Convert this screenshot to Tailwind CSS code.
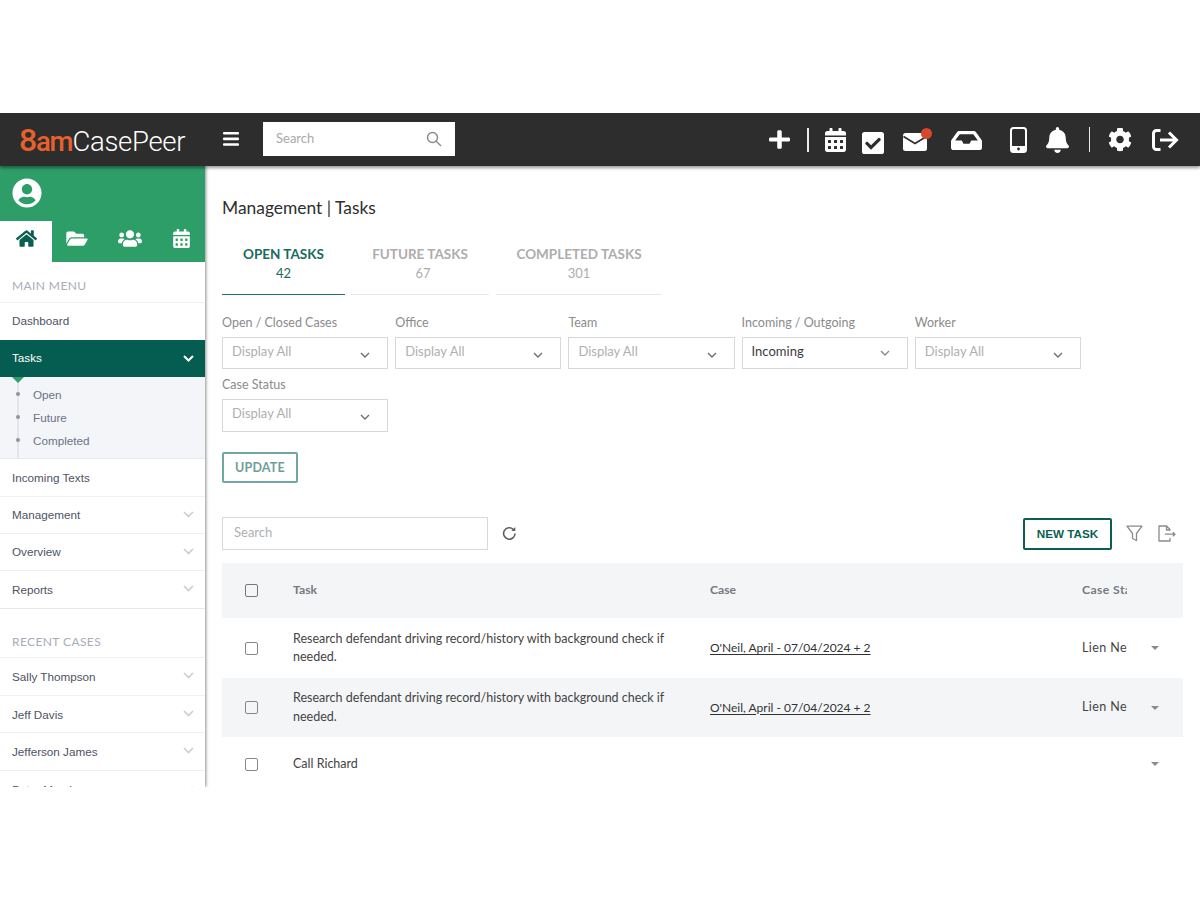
<!DOCTYPE html>
<html lang="en">
<head>
  <meta charset="UTF-8" />
  <title>Management | Tasks</title>
  <script src="https://cdn.jsdelivr.net/npm/@tailwindcss/browser@4"></script>
</head>
<body class="bg-white h-[900px] overflow-hidden font-['Lato',sans-serif]">
  <div class="pt-[113px]">
    <div class="h-[674px] flex flex-col overflow-hidden">

      <!-- top bar -->
      <header class="relative z-20 h-[53px] shrink-0 bg-[#2d2d2d] shadow-[0_2px_3px_rgba(0,0,0,0.4)] flex items-center text-white">
        <div class="ml-[19px] w-[204px] shrink-0 text-[27.5px] leading-none font-['Roboto',sans-serif] font-light tracking-[-0.3px] whitespace-nowrap"><span class="text-[#e8602c] font-medium tracking-[-1.2px]"><span class="text-[32px]">8</span>am</span>CasePeer</div>
        <svg class="w-[16px] h-[14px] shrink-0 -mt-[2px]" viewBox="0 0 16 14" fill="white"><rect width="16" height="2.6" rx="1"/><rect y="5.6" width="16" height="2.6" rx="1"/><rect y="11.2" width="16" height="2.6" rx="1"/></svg>
        <div class="ml-[24px] -mt-[1px] w-[192px] h-[34px] bg-white flex items-center justify-between pl-[13px] pr-[13px] shrink-0">
          <span class="text-[13px] text-[#a9a9a9]">Search</span>
          <svg class="w-[16px] h-[16px]" viewBox="0 0 16 16" fill="none" stroke="#8a8a8a" stroke-width="1.4"><circle cx="6.5" cy="6.5" r="5"/><path d="M10.2 10.2L15 15"/></svg>
        </div>
        <div class="ml-auto mr-[21px] flex items-center">
          <svg class="w-[21px] h-[21px]" viewBox="0 0 448 512" preserveAspectRatio="none" fill="white"><path d="M416 208H272V64c0-17.67-14.33-32-32-32h-32c-17.67 0-32 14.33-32 32v144H32c-17.67 0-32 14.33-32 32v32c0 17.67 14.33 32 32 32h144v144c0 17.67 14.33 32 32 32h32c17.67 0 32-14.33 32-32V304h144c17.67 0 32-14.33 32-32v-32c0-17.67-14.33-32-32-32z"/></svg>
          <div class="ml-[17px] w-[1.5px] h-[24px] bg-white/90"></div>
          <svg class="ml-[16px] w-[21px] h-[24px]" viewBox="0 0 448 512" fill="white"><path d="M0 464c0 26.5 21.5 48 48 48h352c26.5 0 48-21.5 48-48V192H0v272zm320-196c0-6.6 5.4-12 12-12h40c6.6 0 12 5.4 12 12v40c0 6.6-5.4 12-12 12h-40c-6.6 0-12-5.4-12-12v-40zm0 128c0-6.6 5.4-12 12-12h40c6.6 0 12 5.4 12 12v40c0 6.6-5.4 12-12 12h-40c-6.6 0-12-5.4-12-12v-40zM192 268c0-6.6 5.4-12 12-12h40c6.6 0 12 5.4 12 12v40c0 6.6-5.4 12-12 12h-40c-6.6 0-12-5.4-12-12v-40zm0 128c0-6.6 5.4-12 12-12h40c6.6 0 12 5.4 12 12v40c0 6.6-5.4 12-12 12h-40c-6.6 0-12-5.4-12-12v-40zM64 268c0-6.6 5.4-12 12-12h40c6.6 0 12 5.4 12 12v40c0 6.6-5.4 12-12 12H76c-6.6 0-12-5.4-12-12v-40zm0 128c0-6.6 5.4-12 12-12h40c6.6 0 12 5.4 12 12v40c0 6.6-5.4 12-12 12H76c-6.6 0-12-5.4-12-12v-40zM400 64h-48V16c0-8.8-7.2-16-16-16h-32c-8.8 0-16 7.2-16 16v48H160V16c0-8.8-7.2-16-16-16h-32c-8.8 0-16 7.2-16 16v48H48C21.5 64 0 85.5 0 112v48h448v-48c0-26.5-21.5-48-48-48z"/></svg>
          <svg class="ml-[16px] mt-[6px] w-[22px] h-[22px]" viewBox="0 32 448 448" preserveAspectRatio="none" fill="white"><path d="M400 480H48c-26.51 0-48-21.49-48-48V80c0-26.51 21.49-48 48-48h352c26.51 0 48 21.49 48 48v352c0 26.51-21.49 48-48 48zm-204.686-98.059l184-184c6.248-6.248 6.248-16.379 0-22.627l-22.627-22.627c-6.248-6.248-16.379-6.249-22.628 0L184 302.745l-70.059-70.059c-6.248-6.248-16.379-6.248-22.628 0l-22.627 22.627c-6.248 6.248-6.248 16.379 0 22.627l104 104c6.249 6.25 16.379 6.25 22.628.001z"/></svg>
          <div class="relative ml-[19px] mt-[4px] w-[24px] h-[18px]">
            <svg class="w-[24px] h-[18px]" viewBox="0 0 24 18"><rect width="24" height="18" rx="2.5" fill="white"/><path d="M0.5 3.5L12 10.5L23.5 3.5" fill="none" stroke="#2d2d2d" stroke-width="1.6"/></svg>
            <span class="absolute -right-[5px] -top-[5px] w-[11px] h-[11px] rounded-full bg-[#d9472b]"></span>
          </div>
          <svg class="ml-[24px] mt-[1px] w-[31px] h-[19px]" viewBox="0 64 576 384" preserveAspectRatio="none" fill="white"><path d="M567.938 243.908L462.25 85.374A48.003 48.003 0 0 0 422.311 64H153.689a48 48 0 0 0-39.938 21.374L8.062 243.908A47.994 47.994 0 0 0 0 270.533V400c0 26.51 21.49 48 48 48h480c26.51 0 48-21.49 48-48V270.533a47.994 47.994 0 0 0-8.062-26.625zM162.252 128h251.497l85.333 128H376l-32 64H232l-32-64H76.918l85.334-128z"/></svg>
          <svg class="ml-[28px] w-[17px] h-[26px]" viewBox="0 0 17 26"><rect x="1" y="1" width="15" height="24" rx="2.5" fill="none" stroke="white" stroke-width="2"/><rect x="1" y="19" width="15" height="6" fill="white"/><circle cx="8.5" cy="22" r="1.4" fill="#2d2d2d"/></svg>
          <svg class="ml-[19px] w-[23px] h-[26px]" viewBox="0 0 448 512" preserveAspectRatio="none" fill="white"><path d="M224 512c35.32 0 63.97-28.65 63.97-64H160.03c0 35.35 28.65 64 63.97 64zm215.39-149.71c-19.32-20.76-55.47-51.99-55.47-154.29 0-77.7-54.48-139.9-127.94-155.16V32c0-17.67-14.32-32-31.98-32s-31.98 14.33-31.98 32v20.84C118.56 68.1 64.08 130.3 64.08 208c0 102.3-36.15 133.53-55.47 154.29-6 6.45-8.66 14.16-8.61 21.71.11 16.4 12.98 32 32.1 32h383.8c19.12 0 32-15.6 32.1-32 .05-7.55-2.61-15.27-8.61-21.71z"/></svg>
          <div class="ml-[20px] w-[1.5px] h-[25px] bg-white/90"></div>
          <svg class="ml-[18px] w-[24px] h-[25px]" viewBox="0 0 512 512" fill="white"><path d="M487.4 315.7l-42.6-24.6c4.3-23.2 4.3-47 0-70.2l42.6-24.6c4.9-2.8 7.1-8.6 5.5-14-11.1-35.6-30-67.8-54.7-94.6-3.8-4.1-10-5.1-14.8-2.3L380.8 110c-17.9-15.4-38.5-27.3-60.8-35.1V25.8c0-5.6-3.9-10.5-9.4-11.7-36.7-8.2-74.3-7.8-109.2 0-5.5 1.2-9.4 6.1-9.4 11.7V75c-22.2 7.9-42.8 19.8-60.8 35.1L88.7 85.5c-4.9-2.8-11-1.9-14.8 2.3-24.7 26.7-43.6 58.9-54.7 94.6-1.7 5.4.6 11.2 5.5 14L67.3 221c-4.3 23.2-4.3 47 0 70.2l-42.6 24.6c-4.9 2.8-7.1 8.6-5.5 14 11.1 35.6 30 67.8 54.7 94.6 3.8 4.1 10 5.1 14.8 2.3l42.6-24.6c17.9 15.4 38.5 27.3 60.8 35.1v49.2c0 5.6 3.9 10.5 9.4 11.7 36.7 8.2 74.3 7.8 109.2 0 5.5-1.2 9.4-6.1 9.4-11.7v-49.2c22.2-7.9 42.8-19.8 60.8-35.1l42.6 24.6c4.9 2.8 11 1.9 14.8-2.3 24.7-26.7 43.6-58.9 54.7-94.6 1.5-5.5-.7-11.3-5.6-14.1zM256 336c-44.1 0-80-35.9-80-80s35.9-80 80-80 80 35.9 80 80-35.9 80-80 80z"/></svg>
          <svg class="ml-[20px] w-[27px] h-[22px]" viewBox="0 0 27 22" fill="none" stroke="white" stroke-width="3"><path d="M8.5 1.5H4.5a3 3 0 0 0-3 3v13a3 3 0 0 0 3 3h4"/><path d="M8 11h16M17 3.5l7.5 7.5L17 18.5"/></svg>
        </div>
      </header>

      <div class="flex flex-1 min-h-0">
        <!-- sidebar -->
        <aside class="relative z-10 w-[205px] shrink-0 bg-white shadow-[1px_0_3px_rgba(0,0,0,0.45)] overflow-hidden font-['Liberation_Sans',sans-serif] text-[11.7px] text-[#4d5364]">
          <div class="bg-[#2e9e68]">
            <div class="h-[55px] pl-[12px] pt-[12px]">
              <svg class="w-[30px] h-[30px]" viewBox="0 0 496 512" fill="white"><path d="M248 8C111 8 0 119 0 256s111 248 248 248 248-111 248-248S385 8 248 8zm0 96c48.6 0 88 39.4 88 88s-39.4 88-88 88-88-39.4-88-88 39.4-88 88-88zm0 344c-58.7 0-111.3-26.6-146.5-68.2 18.8-35.4 55.6-59.8 98.5-59.8 2.4 0 4.8.4 7.1 1.1 13 4.2 26.6 6.9 40.9 6.9 14.3 0 28-2.7 40.9-6.9 2.3-.7 4.7-1.1 7.1-1.1 42.9 0 79.7 24.4 98.5 59.8C359.3 421.4 306.7 448 248 448z"/></svg>
            </div>
            <div class="h-[41px] grid grid-cols-[52px_50px_55px_48px]">
              <div class="bg-white flex items-center justify-center">
                <svg class="w-[21px] h-[19px] -mt-[6px]" viewBox="0 0 576 512" fill="#0b5f52"><path d="M280.37 148.26L96 300.11V464a16 16 0 0 0 16 16l112.06-.29a16 16 0 0 0 15.92-16V368a16 16 0 0 1 16-16h64a16 16 0 0 1 16 16v95.64a16 16 0 0 0 16 16.05L464 480a16 16 0 0 0 16-16V300L295.67 148.26a12.19 12.19 0 0 0-15.3 0zM571.6 251.47L488 182.56V44.05a12 12 0 0 0-12-12h-56a12 12 0 0 0-12 12v72.61L318.47 43a48 48 0 0 0-61 0L4.34 251.47a12 12 0 0 0-1.6 16.9l25.5 31A12 12 0 0 0 45.15 301l235.22-193.74a12.19 12.19 0 0 1 15.3 0L530.9 301a12 12 0 0 0 16.9-1.6l25.5-31a12 12 0 0 0-1.7-16.93z"/></svg>
              </div>
              <div class="flex items-center justify-center">
                <svg class="w-[22px] h-[19px] -mt-[6px]" viewBox="0 0 576 512" fill="white"><path d="M572.694 292.093L500.27 416.248A63.997 63.997 0 0 1 444.989 448H45.025c-18.523 0-30.064-20.093-20.731-36.093l72.424-124.155A64 64 0 0 1 152 256h399.964c18.523 0 30.064 20.093 20.73 36.093zM152 224h328v-48c0-26.51-21.49-48-48-48H272l-64-64H48C21.49 64 0 85.49 0 112v278.046l69.077-118.418C86.214 242.25 117.989 224 152 224z"/></svg>
              </div>
              <div class="flex items-center justify-center">
                <svg class="w-[24px] h-[19px] -mt-[6px]" viewBox="0 0 640 512" fill="white"><path d="M96 224c35.3 0 64-28.7 64-64s-28.7-64-64-64-64 28.7-64 64 28.7 64 64 64zm448 0c35.3 0 64-28.7 64-64s-28.7-64-64-64-64 28.7-64 64 28.7 64 64 64zm32 32h-64c-17.6 0-33.5 7.1-45.1 18.6 40.3 22.1 68.9 62 75.1 109.4h66c17.7 0 32-14.3 32-32v-32c0-35.3-28.7-64-64-64zm-256 0c61.9 0 112-50.1 112-112S381.9 32 320 32 208 82.1 208 144s50.1 112 112 112zm76.8 32h-8.3c-20.8 10-43.9 16-68.5 16s-47.6-6-68.5-16h-8.3C179.6 288 128 339.6 128 403.2V432c0 26.5 21.5 48 48 48h288c26.5 0 48-21.5 48-48v-28.8c0-63.6-51.6-115.2-115.2-115.2zm-223.7-13.4C161.5 263.1 145.6 256 128 256H64c-35.3 0-64 28.7-64 64v32c0 17.7 14.3 32 32 32h65.9c6.3-47.4 34.9-87.3 75.2-109.4z"/></svg>
              </div>
              <div class="flex items-center justify-center">
                <svg class="w-[17px] h-[19px] -mt-[6px]" viewBox="0 0 448 512" fill="white"><path d="M0 464c0 26.5 21.5 48 48 48h352c26.5 0 48-21.5 48-48V192H0v272zm320-196c0-6.6 5.4-12 12-12h40c6.6 0 12 5.4 12 12v40c0 6.6-5.4 12-12 12h-40c-6.6 0-12-5.4-12-12v-40zm0 128c0-6.6 5.4-12 12-12h40c6.6 0 12 5.4 12 12v40c0 6.6-5.4 12-12 12h-40c-6.6 0-12-5.4-12-12v-40zM192 268c0-6.6 5.4-12 12-12h40c6.6 0 12 5.4 12 12v40c0 6.6-5.4 12-12 12h-40c-6.6 0-12-5.4-12-12v-40zm0 128c0-6.6 5.4-12 12-12h40c6.6 0 12 5.4 12 12v40c0 6.6-5.4 12-12 12h-40c-6.6 0-12-5.4-12-12v-40zM64 268c0-6.6 5.4-12 12-12h40c6.6 0 12 5.4 12 12v40c0 6.6-5.4 12-12 12H76c-6.6 0-12-5.4-12-12v-40zm0 128c0-6.6 5.4-12 12-12h40c6.6 0 12 5.4 12 12v40c0 6.6-5.4 12-12 12H76c-6.6 0-12-5.4-12-12v-40zM400 64h-48V16c0-8.8-7.2-16-16-16h-32c-8.8 0-16 7.2-16 16v48H160V16c0-8.8-7.2-16-16-16h-32c-8.8 0-16 7.2-16 16v48H48C21.5 64 0 85.5 0 112v48h448v-48c0-26.5-21.5-48-48-48z"/></svg>
              </div>
            </div>
          </div>

          <div class="h-[41px] pl-[12px] flex items-end pb-[7px] font-['Lato',sans-serif] text-[12px] tracking-[0.4px] text-[#a7adba] border-b border-[#edeff2]">MAIN MENU</div>
          <div class="h-[37px] pl-[12px] pb-[1px] flex items-center">Dashboard</div>
          <div class="h-[37px] pl-[12px] pr-[11px] pb-[1px] flex items-center justify-between bg-[#055c50] text-white">
            Tasks
            <svg class="w-[11px] h-[7px]" viewBox="0 0 11 7" fill="none" stroke="white" stroke-width="2"><path d="M1 1l4.5 4.5L10 1"/></svg>
          </div>
          <div class="relative h-[82px] bg-[#f3f5f8] text-[#6b7389] border-b border-[#e8eaee]">
            <span class="absolute left-[17px] top-0 bottom-0 w-[2px] bg-[#e2e5ea]"></span>
            <span class="absolute left-[12px] top-0 w-0 h-0 border-x-[6px] border-x-transparent border-t-[6px] border-t-[#2e9e68]"></span>
            <div class="relative flex flex-col pl-[33px] pt-[6px]">
              <div class="h-[23px] flex items-center"><span class="absolute left-[16px] w-[4px] h-[4px] rounded-full bg-[#8e939c] -mt-[2px]"></span>Open</div>
              <div class="h-[23px] flex items-center"><span class="absolute left-[16px] w-[4px] h-[4px] rounded-full bg-[#8e939c] -mt-[2px]"></span>Future</div>
              <div class="h-[23px] flex items-center"><span class="absolute left-[16px] w-[4px] h-[4px] rounded-full bg-[#8e939c] -mt-[2px]"></span>Completed</div>
            </div>
          </div>
          <div class="h-[38px] pl-[12px] flex items-center border-b border-[#edeff2]">Incoming Texts</div>
          <div class="h-[37px] pl-[12px] pr-[11px] flex items-center justify-between border-b border-[#edeff2]">Management<svg class="w-[11px] h-[7px] -mt-[2px]" viewBox="0 0 11 7" fill="none" stroke="#c9cdd4" stroke-width="1.6"><path d="M1 1l4.5 4.5L10 1"/></svg></div>
          <div class="h-[37px] pl-[12px] pr-[11px] flex items-center justify-between border-b border-[#edeff2]">Overview<svg class="w-[11px] h-[7px] -mt-[2px]" viewBox="0 0 11 7" fill="none" stroke="#c9cdd4" stroke-width="1.6"><path d="M1 1l4.5 4.5L10 1"/></svg></div>
          <div class="h-[38px] pl-[12px] pr-[11px] flex items-center justify-between border-b border-[#e6e8ec]">Reports<svg class="w-[11px] h-[7px] -mt-[2px]" viewBox="0 0 11 7" fill="none" stroke="#c9cdd4" stroke-width="1.6"><path d="M1 1l4.5 4.5L10 1"/></svg></div>

          <div class="h-[49px] pl-[12px] flex items-end pb-[6px] font-['Lato',sans-serif] text-[12px] tracking-[0.4px] text-[#a7adba] border-b border-[#edeff2]">RECENT CASES</div>
          <div class="h-[38px] pl-[12px] pr-[11px] flex items-center justify-between border-b border-[#edeff2]">Sally Thompson<svg class="w-[11px] h-[7px] -mt-[2px]" viewBox="0 0 11 7" fill="none" stroke="#c9cdd4" stroke-width="1.6"><path d="M1 1l4.5 4.5L10 1"/></svg></div>
          <div class="h-[37px] pl-[12px] pr-[11px] pt-[1px] flex items-center justify-between border-b border-[#edeff2]">Jeff Davis<svg class="w-[11px] h-[7px] -mt-[2px]" viewBox="0 0 11 7" fill="none" stroke="#c9cdd4" stroke-width="1.6"><path d="M1 1l4.5 4.5L10 1"/></svg></div>
          <div class="h-[38px] pl-[12px] pr-[11px] flex items-center justify-between border-b border-[#edeff2]">Jefferson James<svg class="w-[11px] h-[7px] -mt-[2px]" viewBox="0 0 11 7" fill="none" stroke="#c9cdd4" stroke-width="1.6"><path d="M1 1l4.5 4.5L10 1"/></svg></div>
          <div class="h-[38px] pl-[12px] pr-[11px] flex items-center justify-between">Peter Marsh<svg class="w-[11px] h-[7px] -mt-[2px]" viewBox="0 0 11 7" fill="none" stroke="#c9cdd4" stroke-width="1.6"><path d="M1 1l4.5 4.5L10 1"/></svg></div>
        </aside>

        <!-- main -->
        <main class="flex-1 min-w-0 pl-[17px] pr-[17px] overflow-hidden">
          <h1 class="mt-[31px] text-[17.4px] leading-[22px] text-[#2e2e2e]">Management | Tasks</h1>

          <div class="mt-[15px] flex text-[13.5px] leading-[19px] font-bold text-center">
            <div class="w-[123px] h-[61px] pt-[11px] border-b border-[#1d7367] text-[#1a6a5e]">OPEN TASKS<div class="font-normal text-[13px]">42</div></div>
            <div class="ml-[6px] w-[138px] h-[61px] pt-[11px] border-b border-[#eaeaea] text-[#adadad]">FUTURE TASKS<div class="font-normal text-[13px] pl-[6px]">67</div></div>
            <div class="ml-[7px] w-[166px] h-[61px] pt-[11px] border-b border-[#eaeaea] text-[#adadad]">COMPLETED TASKS<div class="font-normal text-[13px]">301</div></div>
          </div>

          <div class="mt-[20px] w-[870px] flex flex-wrap gap-x-[7px] text-[12.5px] text-[#8b8b8b]">
            <div class="w-[166.2px]">
              <div class="h-[15px] leading-[15px]">Open / Closed Cases</div>
              <div class="mt-[7px] h-[32px] border border-[#d8d8d8] pl-[9px] pr-[17px] pb-[3px] flex items-center justify-between text-[13px] text-[#b0b0b0]">Display All<svg class="w-[10px] h-[6px] mt-[6px]" viewBox="0 0 10 6" fill="none" stroke="#6f6f6f" stroke-width="1.4"><path d="M1 1l4 4 4-4"/></svg></div>
            </div>
            <div class="w-[166.2px]">
              <div class="h-[15px] leading-[15px]">Office</div>
              <div class="mt-[7px] h-[32px] border border-[#d8d8d8] pl-[9px] pr-[17px] pb-[3px] flex items-center justify-between text-[13px] text-[#b0b0b0]">Display All<svg class="w-[10px] h-[6px] mt-[6px]" viewBox="0 0 10 6" fill="none" stroke="#6f6f6f" stroke-width="1.4"><path d="M1 1l4 4 4-4"/></svg></div>
            </div>
            <div class="w-[166.2px]">
              <div class="h-[15px] leading-[15px]">Team</div>
              <div class="mt-[7px] h-[32px] border border-[#d8d8d8] pl-[9px] pr-[17px] pb-[3px] flex items-center justify-between text-[13px] text-[#b0b0b0]">Display All<svg class="w-[10px] h-[6px] mt-[6px]" viewBox="0 0 10 6" fill="none" stroke="#6f6f6f" stroke-width="1.4"><path d="M1 1l4 4 4-4"/></svg></div>
            </div>
            <div class="w-[166.2px]">
              <div class="h-[15px] leading-[15px]">Incoming / Outgoing</div>
              <div class="mt-[7px] h-[32px] border border-[#d8d8d8] pl-[9px] pr-[17px] pb-[3px] flex items-center justify-between text-[13px] text-[#3c3c3c]">Incoming<svg class="w-[10px] h-[6px] mt-[3px]" viewBox="0 0 10 6" fill="none" stroke="#8a8a8a" stroke-width="1.4"><path d="M1 1l4 4 4-4"/></svg></div>
            </div>
            <div class="w-[166.2px]">
              <div class="h-[15px] leading-[15px]">Worker</div>
              <div class="mt-[7px] h-[32px] border border-[#d8d8d8] pl-[9px] pr-[17px] pb-[3px] flex items-center justify-between text-[13px] text-[#b0b0b0]">Display All<svg class="w-[10px] h-[6px] mt-[6px]" viewBox="0 0 10 6" fill="none" stroke="#6f6f6f" stroke-width="1.4"><path d="M1 1l4 4 4-4"/></svg></div>
            </div>
            <div class="w-[166.2px] mt-[8px]">
              <div class="h-[15px] leading-[15px]">Case Status</div>
              <div class="mt-[7px] h-[33px] border border-[#d8d8d8] pl-[9px] pr-[17px] pb-[3px] flex items-center justify-between text-[13px] text-[#b0b0b0]">Display All<svg class="w-[10px] h-[6px] mt-[6px]" viewBox="0 0 10 6" fill="none" stroke="#6f6f6f" stroke-width="1.4"><path d="M1 1l4 4 4-4"/></svg></div>
            </div>
          </div>

          <div class="mt-[20px] w-[76px] h-[31px] pt-[1px] border-2 border-[#6fa8a0] rounded-[2px] flex items-center justify-center text-[12.5px] font-bold tracking-[0.2px] text-[#6f9e98]">UPDATE</div>

          <div class="mt-[34px] flex items-center">
            <div class="w-[266px] h-[33px] border border-[#d8d8d8] pl-[11px] pb-[2px] flex items-center text-[13px] text-[#b0b0b0]">Search</div>
            <svg class="ml-[14px] w-[15px] h-[15px]" viewBox="0 0 15 15" fill="none" stroke="#5f5f5f" stroke-width="1.6"><path d="M13 7.5A5.7 5.7 0 1 1 11.3 3.4"/><path d="M13.3 1v4H9.3z" fill="#5f5f5f" stroke="none"/></svg>
            <div class="ml-auto w-[89px] h-[32px] border-2 border-[#0b5f52] rounded-[2px] flex items-center justify-center font-['Liberation_Sans',sans-serif] text-[11.7px] font-bold text-[#0b5f52]">NEW TASK</div>
            <svg class="ml-[14px] w-[17px] h-[17px]" viewBox="0 0 17 17" fill="none" stroke="#8a8a8a" stroke-width="1.3" stroke-linejoin="round"><path d="M1 1.2h15L10.5 8.5v7l-4-2V8.5z"/></svg>
            <svg class="ml-[14px] mr-[7px] w-[19px] h-[17px]" viewBox="0 0 19 17" fill="none" stroke="#8a8a8a" stroke-width="1.3" stroke-linejoin="round"><path d="M13 5.5V4.5L9.5 1H2v15h11v-3"/><path d="M9.5 1v4H13M8 9.2h10M15.8 7.2l2.2 2-2.2 2"/></svg>
          </div>

          <!-- task table -->
          <div class="mt-[13px] text-[12.5px] text-[#444]">
            <div class="h-[55px] flex items-center bg-[#f3f5f7] font-bold text-[12.2px] text-[#77797c]">
              <div class="w-[71px] pl-[23px]"><span class="block w-[13px] h-[13px] border-[1.5px] border-[#777] rounded-[2px]"></span></div>
              <div class="w-[417px]">Task</div>
              <div class="w-[372px]">Case</div>
              <div class="w-[45px] overflow-hidden whitespace-nowrap tracking-[0.4px]">Case Status</div>
            </div>
            <div class="h-[60px] flex items-center">
              <div class="w-[71px] pl-[23px]"><span class="block w-[13px] h-[13px] border-[1.5px] border-[#888] rounded-[2px]"></span></div>
              <div class="w-[417px] leading-[18.5px] pr-[40px]">Research defendant driving record/history with background check if needed.</div>
              <div class="w-[372px] text-[12px] underline underline-offset-2 text-[#333]">O'Neil, April - 07/04/2024 + 2</div>
              <div class="w-[45px] overflow-hidden whitespace-nowrap tracking-[0.4px]">Lien Negotiation</div>
              <span class="ml-[24px] w-0 h-0 border-x-[4px] border-x-transparent border-t-[4px] border-t-[#8a8a8a]"></span>
            </div>
            <div class="h-[59px] flex items-center bg-[#f3f5f7]">
              <div class="w-[71px] pl-[23px]"><span class="block w-[13px] h-[13px] border-[1.5px] border-[#888] rounded-[2px]"></span></div>
              <div class="w-[417px] leading-[18.5px] pr-[40px]">Research defendant driving record/history with background check if needed.</div>
              <div class="w-[372px] text-[12px] underline underline-offset-2 text-[#333]">O'Neil, April - 07/04/2024 + 2</div>
              <div class="w-[45px] overflow-hidden whitespace-nowrap tracking-[0.4px]">Lien Negotiation</div>
              <span class="ml-[24px] w-0 h-0 border-x-[4px] border-x-transparent border-t-[4px] border-t-[#8a8a8a]"></span>
            </div>
            <div class="h-[54px] flex items-center">
              <div class="w-[71px] pl-[23px]"><span class="block w-[13px] h-[13px] border-[1.5px] border-[#888] rounded-[2px]"></span></div>
              <div class="w-[417px]">Call Richard</div>
              <div class="w-[372px]"></div>
              <div class="w-[45px]"></div>
              <span class="ml-[24px] w-0 h-0 border-x-[4px] border-x-transparent border-t-[4px] border-t-[#8a8a8a]"></span>
            </div>
          </div>
        </main>
      </div>
    </div>
  </div>
</body>
</html>
